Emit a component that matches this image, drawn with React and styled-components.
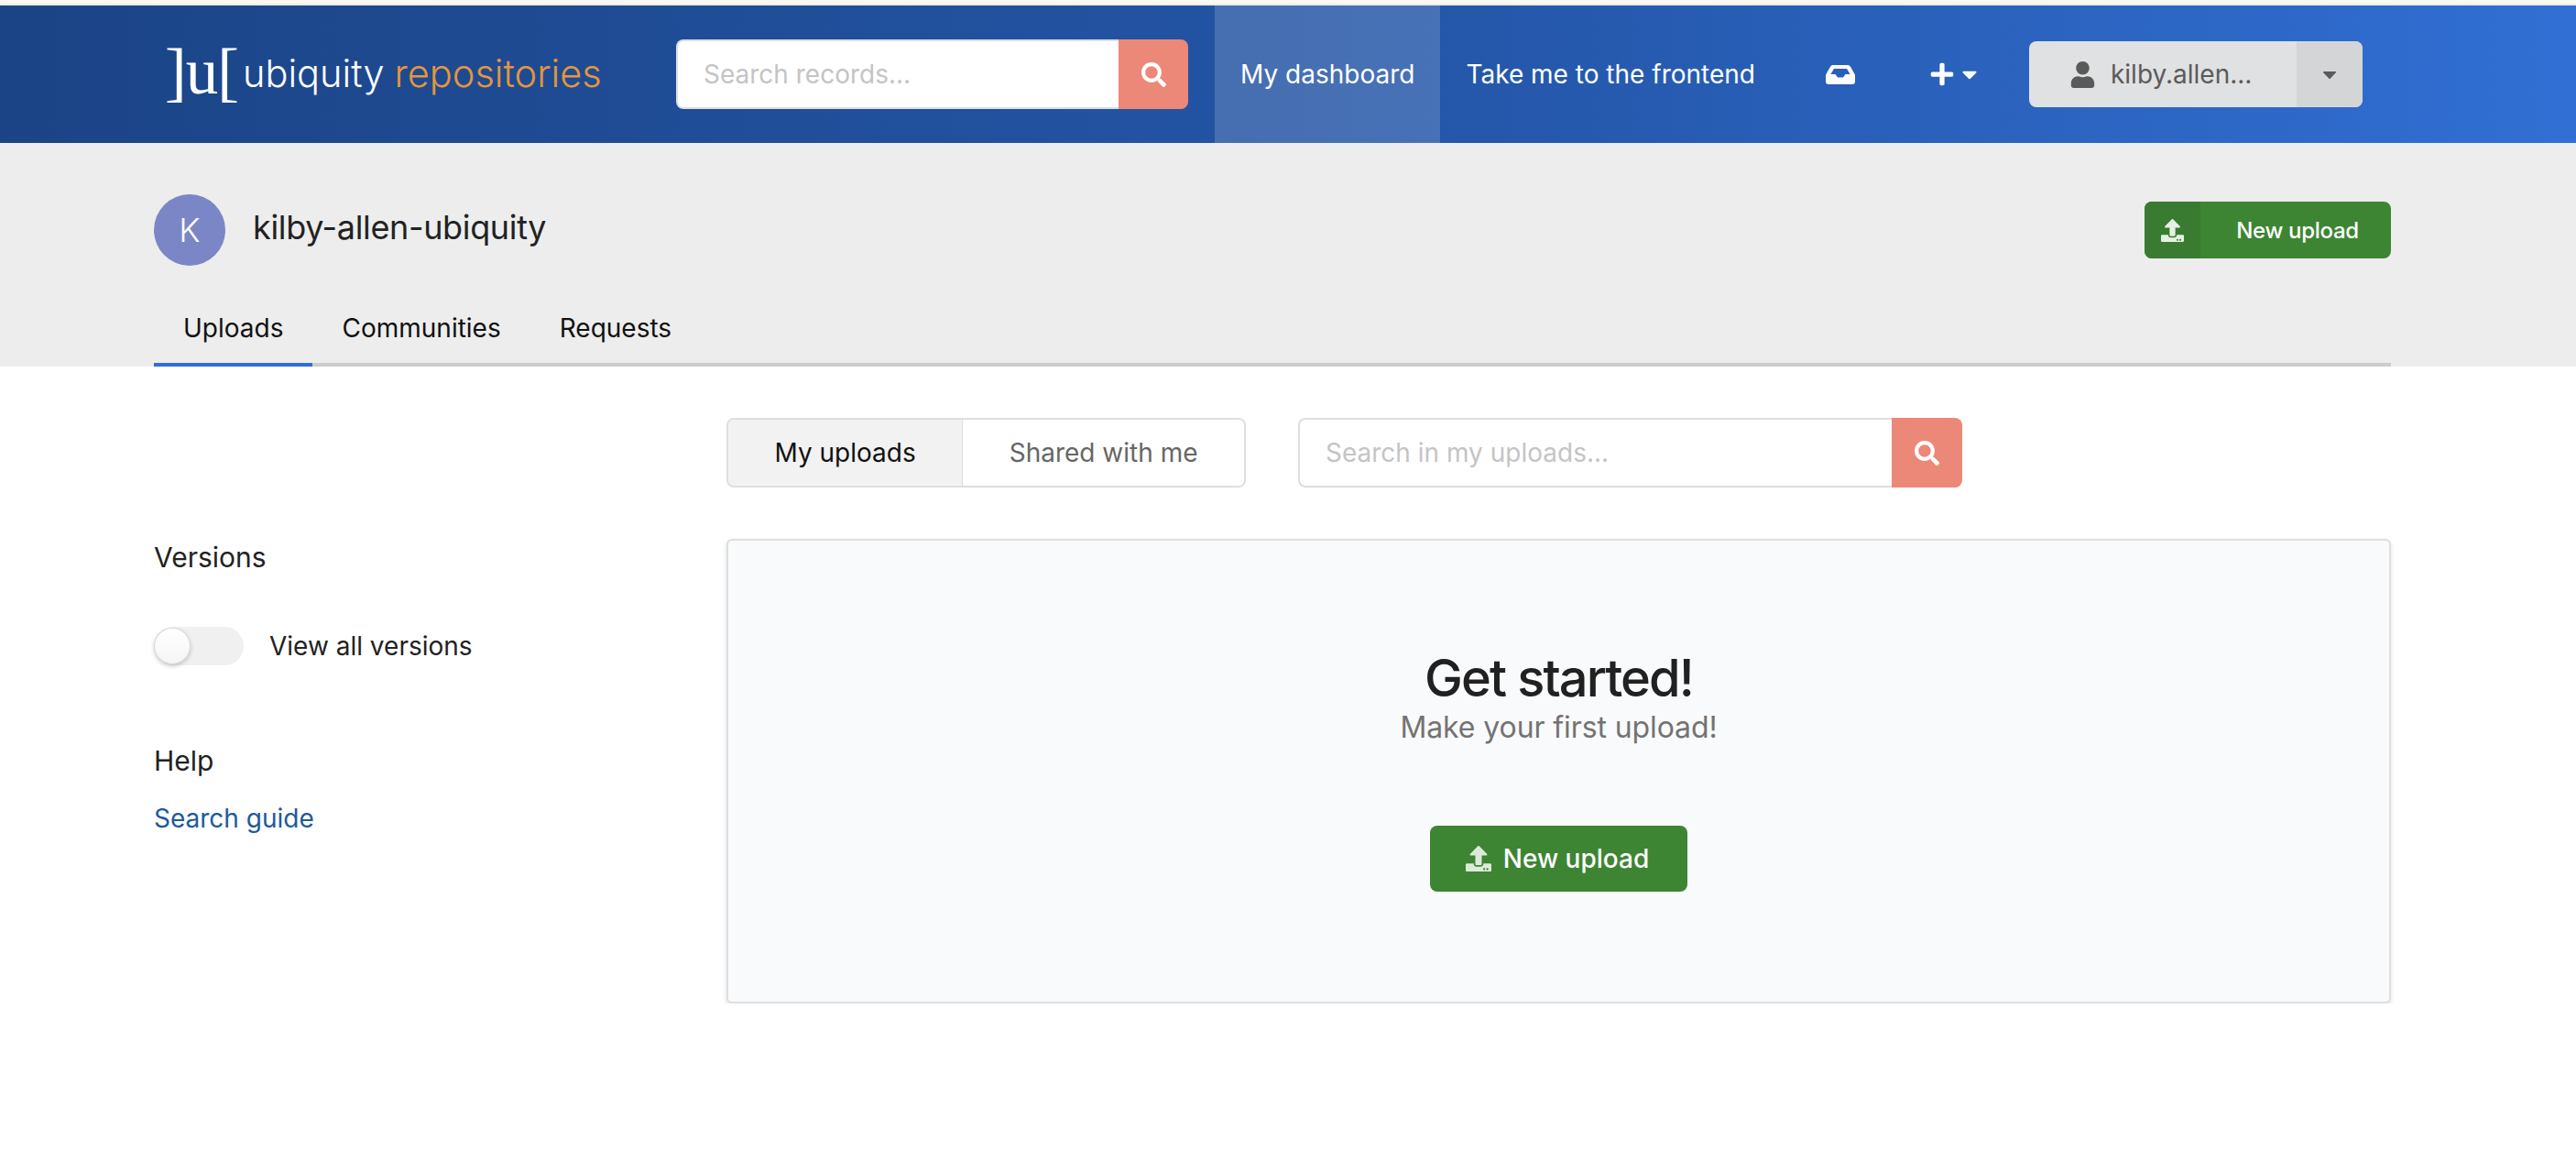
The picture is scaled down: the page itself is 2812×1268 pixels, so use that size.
import React from 'react';
import styled, { createGlobalStyle } from 'styled-components';
import { FaSearch, FaUpload, FaPlus, FaUser, FaCaretDown } from 'react-icons/fa';

const Global = createGlobalStyle`
  html, body { margin: 0; padding: 0; background: #fff; }
  * { box-sizing: border-box; }
  body { font-family: Inter, "Noto Sans", sans-serif; color: #212121; }
`;

const TopStrip = styled.div`
  height: 6px;
  background: #f9f9f1;
  border-bottom: 2px solid #ecece4;
`;

const Header = styled.header`
  height: 150px;
  display: flex;
  align-items: center;
  padding-left: 180px;
  background: linear-gradient(to right, #1b4486 0%, #2456a8 55%, #316fd4 100%);
`;

const Logo = styled.div`
  width: 558px;
  display: flex;
  align-items: center;
  flex-shrink: 0;
`;

const LogoMark = styled.span`
  font-family: "Liberation Serif", serif;
  font-size: 71px;
  line-height: 1;
  color: #fff;
  width: 85px;
  letter-spacing: -1px;
  margin-top: -6px;
`;

const LogoText = styled.span`
  font-size: 41.5px;
  font-weight: 300;
  margin-top: -2px;
  color: ${(p) => p.$color || '#fff'};
  margin-right: ${(p) => p.$gap || 0}px;
  white-space: nowrap;
`;

const SearchBox = styled.div`
  display: flex;
  width: ${(p) => p.$width}px;
  height: ${(p) => p.$height}px;
  flex-shrink: 0;
`;

const SearchInput = styled.div`
  flex: 1;
  display: flex;
  align-items: center;
  padding-left: ${(p) => p.$pad}px;
  background: #fff;
  border: 2px solid #dededf;
  border-right: none;
  border-radius: 8px 0 0 8px;
  font-size: 28px;
  color: #c4c4c4;
`;

const SearchButton = styled.div`
  width: ${(p) => p.$width}px;
  display: flex;
  align-items: center;
  justify-content: center;
  background: #ec8877;
  color: #fff;
  font-size: 27px;
  border-radius: 0 8px 8px 0;
`;

const NavItem = styled.div`
  align-self: stretch;
  display: flex;
  align-items: center;
  padding: 0 28px;
  font-size: 28px;
  color: #fff;
  white-space: nowrap;
  background: ${(p) => (p.$active ? 'rgba(255,255,255,0.16)' : 'transparent')};
  margin-left: ${(p) => p.$left || 0}px;
  flex-shrink: 0;
`;

const NavIcons = styled.div`
  display: flex;
  align-items: center;
  color: #fff;
  margin-left: 49px;
  flex-shrink: 0;
`;

const InboxGlyph = styled.svg`
  width: 32px;
  height: 21px;
  margin-right: 81px;
  fill: currentColor;
`;

const PlusIcon = styled(FaPlus)`
  font-size: 28px;
`;

const PlusCaret = styled(FaCaretDown)`
  font-size: 26px;
  margin-left: 3px;
`;

const UserButton = styled.div`
  width: 364px;
  height: 72px;
  margin-left: 52px;
  display: flex;
  border-radius: 8px;
  overflow: hidden;
  background: #e0e1e2;
  color: #5a5a5a;
  flex-shrink: 0;
`;

const UserLabel = styled.div`
  flex: 1;
  display: flex;
  align-items: center;
  padding-left: 44px;
  gap: 16px;
  font-size: 28px;
`;

const UserIcon = styled(FaUser)`
  font-size: 29px;
`;

const UserCaret = styled.div`
  width: 72px;
  display: flex;
  align-items: center;
  justify-content: center;
  background: #d4d5d7;
  font-size: 24px;
`;

const SubHeader = styled.section`
  height: 244px;
  background: #ededed;
  padding: 56px 202px 0 168px;
  display: flex;
  flex-direction: column;
`;

const ProfileRow = styled.div`
  display: flex;
  align-items: center;
  justify-content: space-between;
  height: 78px;
`;

const Profile = styled.div`
  display: flex;
  align-items: center;
  gap: 30px;
`;

const Avatar = styled.div`
  width: 78px;
  height: 78px;
  border-radius: 50%;
  background: #7b86c6;
  color: #fff;
  display: flex;
  align-items: center;
  justify-content: center;
  font-size: 36px;
  font-weight: 300;
`;

const UserName = styled.div`
  font-size: 36px;
  letter-spacing: -0.35px;
  color: #222;
  margin-top: -6px;
`;

const UploadButton = styled.div`
  display: flex;
  width: 269px;
  height: 62px;
  background: #3d8533;
  border-radius: 8px;
  overflow: hidden;
  color: #fff;
  font-size: 24px;
  font-weight: 500;
  letter-spacing: -0.3px;
`;

const UploadIconCell = styled.div`
  width: 61px;
  display: flex;
  align-items: center;
  justify-content: center;
  background: #397b30;
  font-size: 25px;
  color: #e6f0e4;
`;

const UploadText = styled.div`
  flex: 1;
  display: flex;
  align-items: center;
  justify-content: center;
  padding-left: 4px;
`;

const Tabs = styled.nav`
  display: flex;
  margin-top: auto;
  border-bottom: 4px solid #ccc;
`;

const Tab = styled.div`
  padding: 0 32px 10px;
  height: 70px;
  display: flex;
  align-items: center;
  font-size: 28px;
  color: #111;
  margin-bottom: -4px;
  border-bottom: 4px solid ${(p) => (p.$active ? '#316fd4' : 'transparent')};
`;

const Body = styled.main`
  display: flex;
  padding: 56px 202px 0 168px;
`;

const Sidebar = styled.aside`
  width: 625px;
  padding-top: 132px;
  flex-shrink: 0;
`;

const SideTitle = styled.div`
  font-size: 30px;
  line-height: 40px;
  color: #222;
`;

const ToggleRow = styled.div`
  display: flex;
  align-items: center;
  gap: 28px;
  margin: 56px 0 84px;
  font-size: 28px;
  color: #222;
`;

const ToggleTrack = styled.div`
  position: relative;
  width: 98px;
  height: 42px;
  border-radius: 21px;
  background: #f0f0f0;
`;

const ToggleKnob = styled.div`
  position: absolute;
  left: 0;
  top: 1px;
  width: 40px;
  height: 40px;
  border-radius: 50%;
  background: linear-gradient(#fff, #f5f5f5);
  box-shadow: 0 2px 4px rgba(34, 36, 38, 0.22), 0 0 0 1px rgba(34, 36, 38, 0.16) inset;
`;

const GuideLink = styled.a`
  display: block;
  margin-top: 26px;
  font-size: 28px;
  color: #1c5a9c;
`;

const Content = styled.div`
  flex: 1;
  min-width: 0;
`;

const Filters = styled.div`
  display: flex;
  align-items: center;
  gap: 57px;
`;

const FilterGroup = styled.div`
  display: flex;
  width: 567px;
  height: 76px;
  border: 2px solid #dededf;
  border-radius: 8px;
  overflow: hidden;
`;

const FilterItem = styled.div`
  display: flex;
  align-items: center;
  justify-content: center;
  width: ${(p) => p.$width}px;
  font-size: 28px;
  color: ${(p) => (p.$active ? '#111' : '#666')};
  background: ${(p) => (p.$active ? '#f2f2f2' : '#fff')};
  border-right: ${(p) => (p.$active ? '1px solid #dededf' : 'none')};
`;

const Panel = styled.section`
  margin-top: 56px;
  height: 507px;
  padding-top: 122px;
  background: #f9fafc;
  border: 2px solid #dededf;
  border-radius: 6px;
  box-shadow: 0 3px 5px rgba(34, 36, 38, 0.14);
  display: flex;
  flex-direction: column;
  align-items: center;
`;

const PanelTitle = styled.h1`
  margin: 0;
  font-size: 56px;
  line-height: 56px;
  font-weight: 500;
  letter-spacing: -1.9px;
  color: #212121;
`;

const PanelSub = styled.p`
  margin: 3px 0 0;
  font-size: 32px;
  line-height: 46px;
  letter-spacing: -0.1px;
  color: #737373;
`;

const StartButton = styled.div`
  margin-top: 84px;
  width: 281px;
  height: 72px;
  background: #3d8533;
  border-radius: 8px;
  color: #fff;
  font-size: 28px;
  font-weight: 500;
  display: flex;
  align-items: center;
  justify-content: center;
  gap: 13px;
  padding-right: 3px;
`;

const StartIcon = styled(FaUpload)`
  font-size: 28px;
  color: #dcebd9;
`;

const InboxIcon = () => (
  <InboxGlyph viewBox="0 0 32 21">
    <path
      fillRule="evenodd"
      d="M8 0H24C25.2 0 26.2 .6 26.8 1.6L31.4 9.6C31.8 10.3 32 11 32 11.8V18C32 19.7 30.7 21 29 21H3C1.3 21 0 19.7 0 18V11.8C0 11 .2 10.3 .6 9.6L5.2 1.6C5.8 .6 6.8 0 8 0ZM9 4L5.4 10H10.5L13 13.5H19L21.5 10H26.6L23 4Z"
    />
  </InboxGlyph>
);

export default function App() {
  return (
    <>
      <Global />
      <TopStrip />
      <Header>
        <Logo>
          <LogoMark>]u[</LogoMark>
          <LogoText $gap={11}>ubiquity</LogoText>
          <LogoText $color="#e5963c">repositories</LogoText>
        </Logo>
        <SearchBox $width={559} $height={76}>
          <SearchInput $pad={28}>Search records...</SearchInput>
          <SearchButton $width={76}><FaSearch /></SearchButton>
        </SearchBox>
        <NavItem $active $left={29}>My dashboard</NavItem>
        <NavItem>Take me to the frontend</NavItem>
        <NavIcons>
          <InboxIcon />
          <PlusIcon />
          <PlusCaret />
        </NavIcons>
        <UserButton>
          <UserLabel><UserIcon />kilby.allen...</UserLabel>
          <UserCaret><FaCaretDown /></UserCaret>
        </UserButton>
      </Header>
      <SubHeader>
        <ProfileRow>
          <Profile>
            <Avatar>K</Avatar>
            <UserName>kilby-allen-ubiquity</UserName>
          </Profile>
          <UploadButton>
            <UploadIconCell><FaUpload /></UploadIconCell>
            <UploadText>New upload</UploadText>
          </UploadButton>
        </ProfileRow>
        <Tabs>
          <Tab $active>Uploads</Tab>
          <Tab>Communities</Tab>
          <Tab>Requests</Tab>
        </Tabs>
      </SubHeader>
      <Body>
        <Sidebar>
          <SideTitle>Versions</SideTitle>
          <ToggleRow>
            <ToggleTrack><ToggleKnob /></ToggleTrack>
            View all versions
          </ToggleRow>
          <SideTitle>Help</SideTitle>
          <GuideLink>Search guide</GuideLink>
        </Sidebar>
        <Content>
          <Filters>
            <FilterGroup>
              <FilterItem $active $width={258}>My uploads</FilterItem>
              <FilterItem $width={309}>Shared with me</FilterItem>
            </FilterGroup>
            <SearchBox $width={725} $height={76}>
              <SearchInput $pad={28}>Search in my uploads...</SearchInput>
              <SearchButton $width={77}><FaSearch /></SearchButton>
            </SearchBox>
          </Filters>
          <Panel>
            <PanelTitle>Get started!</PanelTitle>
            <PanelSub>Make your first upload!</PanelSub>
            <StartButton><StartIcon />New upload</StartButton>
          </Panel>
        </Content>
      </Body>
    </>
  );
}
